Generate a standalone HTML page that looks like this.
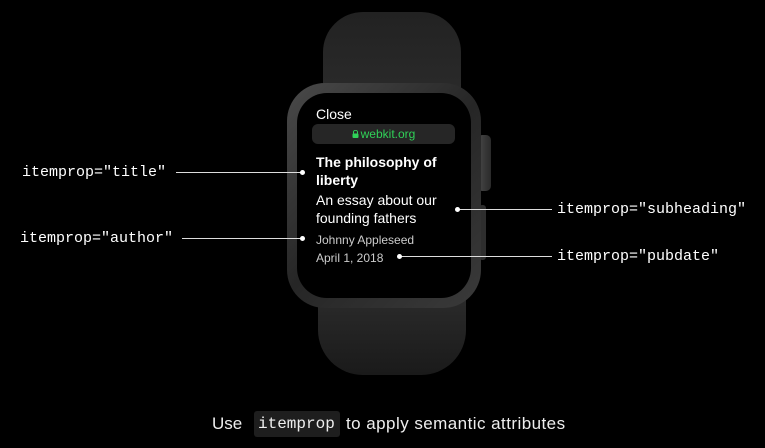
<!DOCTYPE html>
<html><head><style>
body{margin:0;width:765px;height:448px;background:#000;position:relative;overflow:hidden;font-family:"Liberation Sans",sans-serif;color:#fff}
.a{position:absolute}
.mono{font-family:"Liberation Mono",monospace;font-size:15px;color:#fff}
.line{position:absolute;height:1px;background:#ddd}
.dot{position:absolute;width:5px;height:5px;border-radius:50%;background:#fff}
</style></head><body>
<div class="a" style="left:323px;top:12px;width:138px;height:100px;background:linear-gradient(#222,#2c2c2c);border-radius:40px 40px 0 0"></div>
<div class="a" style="left:318px;top:290px;width:148px;height:85px;background:linear-gradient(#2c2c2c,#1a1a1a);border-radius:0 0 45px 45px"></div>
<div class="a" style="left:477px;top:135px;width:14px;height:56px;background:linear-gradient(90deg,#4a4a4a,#2a2a2a);border-radius:5px"></div>
<div class="a" style="left:479px;top:205px;width:7px;height:55px;background:#2e2e2e;border-radius:3px"></div>
<div class="a" style="left:287px;top:83px;width:194px;height:225px;background:linear-gradient(135deg,#4a4a4a,#262626 50%,#3a3a3a);border-radius:38px"></div>
<div class="a" style="left:297px;top:93px;width:174px;height:205px;background:#000;border-radius:30px"></div>
<div class="a" style="left:316px;top:106px;font-size:14px;">Close</div>
<div class="a" style="left:312px;top:124px;width:143px;height:20px;background:#262626;border-radius:6px;color:#30d158;font-size:12px;text-align:center;line-height:20px"><svg width="7" height="8" viewBox="0 0 7 8" style="vertical-align:-0px;margin-right:2px"><path d="M1.5 3.5V2.3a2 2 0 0 1 4 0v1.2" stroke="#30d158" fill="none" stroke-width="1"/><rect x="0.5" y="3.5" width="6" height="4.5" rx="1" fill="#30d158"/></svg>webkit.org</div>
<div class="a" style="left:316px;top:153px;font-size:14px;font-weight:bold;line-height:18px">The philosophy of<br>liberty</div>
<div class="a" style="left:316px;top:191px;font-size:14px;line-height:18px">An essay about our<br>founding fathers</div>
<div class="a" style="left:316px;top:231px;font-size:12px;line-height:18px;color:#ccc">Johnny Appleseed<br>April 1, 2018</div>
<div class="a mono" style="left:22px;top:164px">itemprop="title"</div>
<div class="line" style="left:176px;top:172px;width:126px"></div><div class="dot" style="left:300px;top:170px"></div>
<div class="a mono" style="left:20px;top:230px">itemprop="author"</div>
<div class="line" style="left:182px;top:238px;width:120px"></div><div class="dot" style="left:300px;top:236px"></div>
<div class="a mono" style="left:557px;top:201px">itemprop="subheading"</div>
<div class="line" style="left:458px;top:209px;width:94px"></div><div class="dot" style="left:455px;top:207px"></div>
<div class="a mono" style="left:557px;top:248px">itemprop="pubdate"</div>
<div class="line" style="left:400px;top:256px;width:152px"></div><div class="dot" style="left:397px;top:254px"></div>
<div class="a" style="left:212px;top:414px;font-size:17px;color:#eee">Use</div>
<div class="a" style="left:254px;top:411px;width:86px;height:26px;background:#1e1e1e;border-radius:3px"></div>
<div class="a mono" style="left:258px;top:415px;font-size:16px;color:#eee">itemprop</div>
<div class="a" style="left:346px;top:414px;font-size:17px;color:#eee;letter-spacing:0.45px">to apply semantic attributes</div>
</body></html>
